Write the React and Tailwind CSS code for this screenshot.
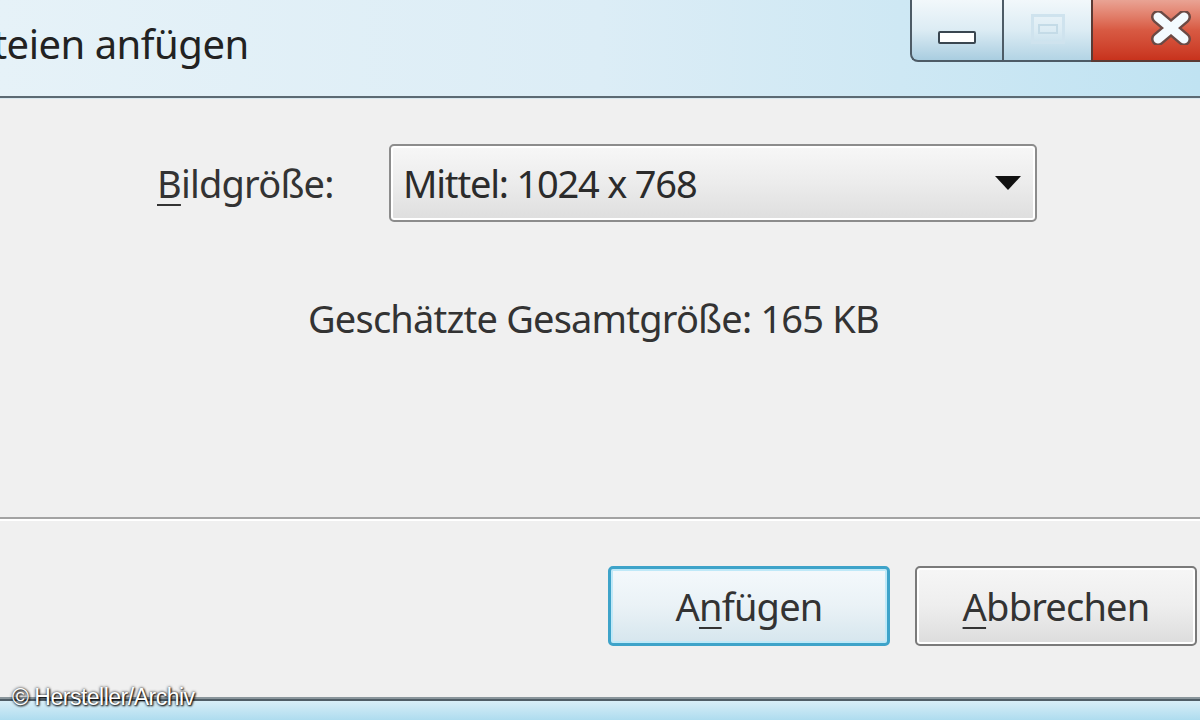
import React from "react";

const font = { fontFamily: '"Noto Sans", "Open Sans", sans-serif' };

const Underlined = ({ children }) => (
  <span className="underline decoration-2 underline-offset-[6px]">{children}</span>
);

const WindowButtons = () => (
  <div className="flex h-[62px] mr-[-12px]">
    <div className="w-[92px] h-full flex items-center justify-center rounded-bl-[8px] border-l-2 border-b-2 border-[#4d5b66] bg-gradient-to-b from-[#f2f8fb] via-[#dcecf4] to-[#a9cde0]">
      <div className="mt-[14px] w-[38px] h-[13px] rounded-[2px] border-2 border-[#3a4650] bg-white" />
    </div>
    <div className="w-[89px] h-full flex items-center justify-center border-l-2 border-b-2 border-[#4d5b66] bg-gradient-to-b from-[#f2f8fb] via-[#dcecf4] to-[#b3d4e5]">
      <div className="mt-[-2px] w-[34px] h-[30px] border-[3px] border-[#cfe3ee] flex items-center justify-center">
        <div className="w-[20px] h-[10px] border-2 border-[#c4dbe7]" />
      </div>
    </div>
    <div className="w-[121px] h-full flex items-center justify-center border-l-2 border-b-2 border-[#5a3a34] bg-gradient-to-b from-[#e9a394] via-[#d85a43] to-[#c8321c]">
      <svg width="40" height="34" viewBox="0 0 40 34" className="ml-[36px] mt-[-4px]">
        <path d="M7 6 L33 28 M33 6 L7 28" stroke="#6b4a45" strokeWidth="14" strokeLinecap="round" />
        <path d="M7 6 L33 28 M33 6 L7 28" stroke="#f4fbff" strokeWidth="9" strokeLinecap="round" />
      </svg>
    </div>
  </div>
);

export default function App() {
  return (
    <div className="relative w-[1200px] h-[720px] overflow-hidden bg-[#f0f0f0] flex flex-col" style={font}>
      <div className="h-[96px] shrink-0 flex justify-between bg-gradient-to-r from-[#e6f2f8] via-[#dcedf6] to-[#c0e3f2]">
        <div className="pt-[14px] ml-[-58px] text-[40px] text-[#222] tracking-[-0.5px]">Dateien anfügen</div>
        <WindowButtons />
      </div>
      <div className="h-[2px] shrink-0 bg-[#5c6a73]" />
      <div className="h-[1px] shrink-0 bg-[#d9e8ef]" />

      <div className="flex-1 flex flex-col">
        <div className="flex items-center mt-[45px]">
          <div className="ml-[157px] w-[232px] text-[38px] text-[#333] tracking-[-0.8px]">
            <Underlined>B</Underlined>ildgröße:
          </div>
          <div className="w-[648px] h-[78px] flex items-center justify-between rounded-[5px] border-2 border-[#8c8c8c] bg-gradient-to-b from-[#f7f7f7] via-[#ececec] to-[#dedede] shadow-[inset_0_0_0_2px_#ffffff]">
            <span className="ml-[12px] text-[38px] text-[#2b2b2b] tracking-[-1.2px]">Mittel: 1024 x 768</span>
            <svg width="26" height="14" viewBox="0 0 26 14" className="mr-[14px]">
              <path d="M0 0 L26 0 L13 14 Z" fill="#111" />
            </svg>
          </div>
        </div>

        <div className="mt-[68px] ml-[308px] text-[38px] text-[#333] tracking-[-0.8px]">
          Geschätzte Gesamtgröße: 165 KB
        </div>

        <div className="mt-[170px] h-[2px] bg-[#a3a3a3]" />
        <div className="h-[2px] bg-white" />

        <div className="flex mt-[45px] ml-[608px] gap-[25px]">
          <div className="w-[282px] h-[80px] flex items-center justify-center rounded-[5px] border-[3px] border-[#3ea3c9] bg-gradient-to-b from-[#f4f9fc] via-[#eaf2f6] to-[#d6e6ee] shadow-[inset_0_0_0_2px_#bfe9f8] text-[38px] text-[#333] tracking-[-0.8px]">
            <span>A<Underlined>n</Underlined>fügen</span>
          </div>
          <div className="w-[282px] h-[80px] flex items-center justify-center rounded-[5px] border-2 border-[#7a7a7a] bg-gradient-to-b from-[#f6f6f6] via-[#eeeeee] to-[#dcdcdc] shadow-[inset_0_0_0_2px_#ffffff] text-[38px] text-[#333] tracking-[-0.8px]">
            <span><Underlined>A</Underlined>bbrechen</span>
          </div>
        </div>
      </div>

      <div className="h-[2px] shrink-0 bg-[#8a969c]" />
      <div className="h-[2px] shrink-0 bg-[#4f5d66]" />
      <div className="h-[19px] shrink-0 bg-gradient-to-b from-[#d8eef7] to-[#aedcef]" />

      <div
        className="absolute left-[12px] bottom-[6px] text-[23px] text-white tracking-[-0.5px]"
        style={{ fontFamily: '"Liberation Sans", Arial, sans-serif', textShadow: "0 0 3px #000, 1px 1px 2px #000" }}
      >
        © Hersteller/Archiv
      </div>
    </div>
  );
}
